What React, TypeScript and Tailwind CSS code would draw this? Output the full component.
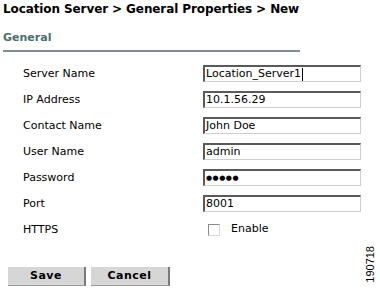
import React from "react";

const fields = [
  { label: "Server Name", value: "Location_Server1", caret: true },
  { label: "IP Address", value: "10.1.56.29" },
  { label: "Contact Name", value: "John Doe" },
  { label: "User Name", value: "admin" },
  { label: "Password", value: "●●●●●", small: true },
  { label: "Port", value: "8001" },
];

const App: React.FC = () => {
  return (
    <div className="relative w-[380px] h-[291px] bg-white overflow-hidden text-black font-['DejaVu_Sans',Verdana,sans-serif]">
      {/* TITLE */}
      <div className="pl-[3px] pt-[1px] text-[12px] font-bold leading-[16px] tracking-[-0.1px]">
        Location Server &gt; General Properties &gt; New
      </div>

      {/* SECTION HEADER */}
      <div className="mt-[14px] ml-[3px] w-[297px]">
        <div className="text-[11px] font-bold text-[#4b6e6e] leading-[14px]">General</div>
        <div className="mt-[5px] h-[2px] bg-[#7d8f8f]" />
      </div>

      {/* FORM */}
      <div className="mt-[13px] flex flex-col gap-[9px] text-[11px]">
        {fields.map((f) => (
          <div key={f.label} className="flex items-center h-[17px]">
            <div className="w-[203px] pl-[23px] leading-[17px]">{f.label}</div>
            <div className="w-[158px] h-[17px] border-t-2 border-l-2 border-t-[#5a5a5a] border-l-[#5a5a5a] border-b border-r border-b-[#cfcfcf] border-r-[#cfcfcf] flex items-center pl-[1px] leading-[14px]">
              <span className={f.small ? "text-[7px] tracking-[0.5px]" : ""}>{f.value}</span>
              {f.caret && <span className="ml-[1px] w-[1px] h-[13px] bg-black" />}
            </div>
          </div>
        ))}
        <div className="flex items-center h-[17px]">
          <div className="w-[205px] pl-[23px] leading-[17px]">HTTPS</div>
          <div className="w-[12px] h-[12px] border-t border-l border-t-[#8a8a8a] border-l-[#8a8a8a] border-b border-r border-b-[#d8d8d8] border-r-[#d8d8d8] ml-[3px]" />
          <div className="ml-[11px]">Enable</div>
        </div>
      </div>

      {/* BUTTONS */}
      <div className="mt-[29px] ml-[8px] flex gap-[5px] text-[11px] font-bold">
        <button className="w-[78px] h-[19px] bg-[#d6d6d6] border-r-2 border-r-[#7a7a7a] border-b border-b-[#9a9a9a] tracking-[0.5px]">
          Save
        </button>
        <button className="w-[79px] h-[19px] bg-[#d6d6d6] border-r-2 border-r-[#7a7a7a] border-b border-b-[#9a9a9a] tracking-[0.5px]">
          Cancel
        </button>
      </div>

      {/* FIGURE ID */}
      <div className="absolute right-[4px] top-[246px] [writing-mode:vertical-rl] rotate-180 text-[11px] font-['Liberation_Sans',Arial,sans-serif] leading-[11px]">
        190718
      </div>
    </div>
  );
};

export default App;
